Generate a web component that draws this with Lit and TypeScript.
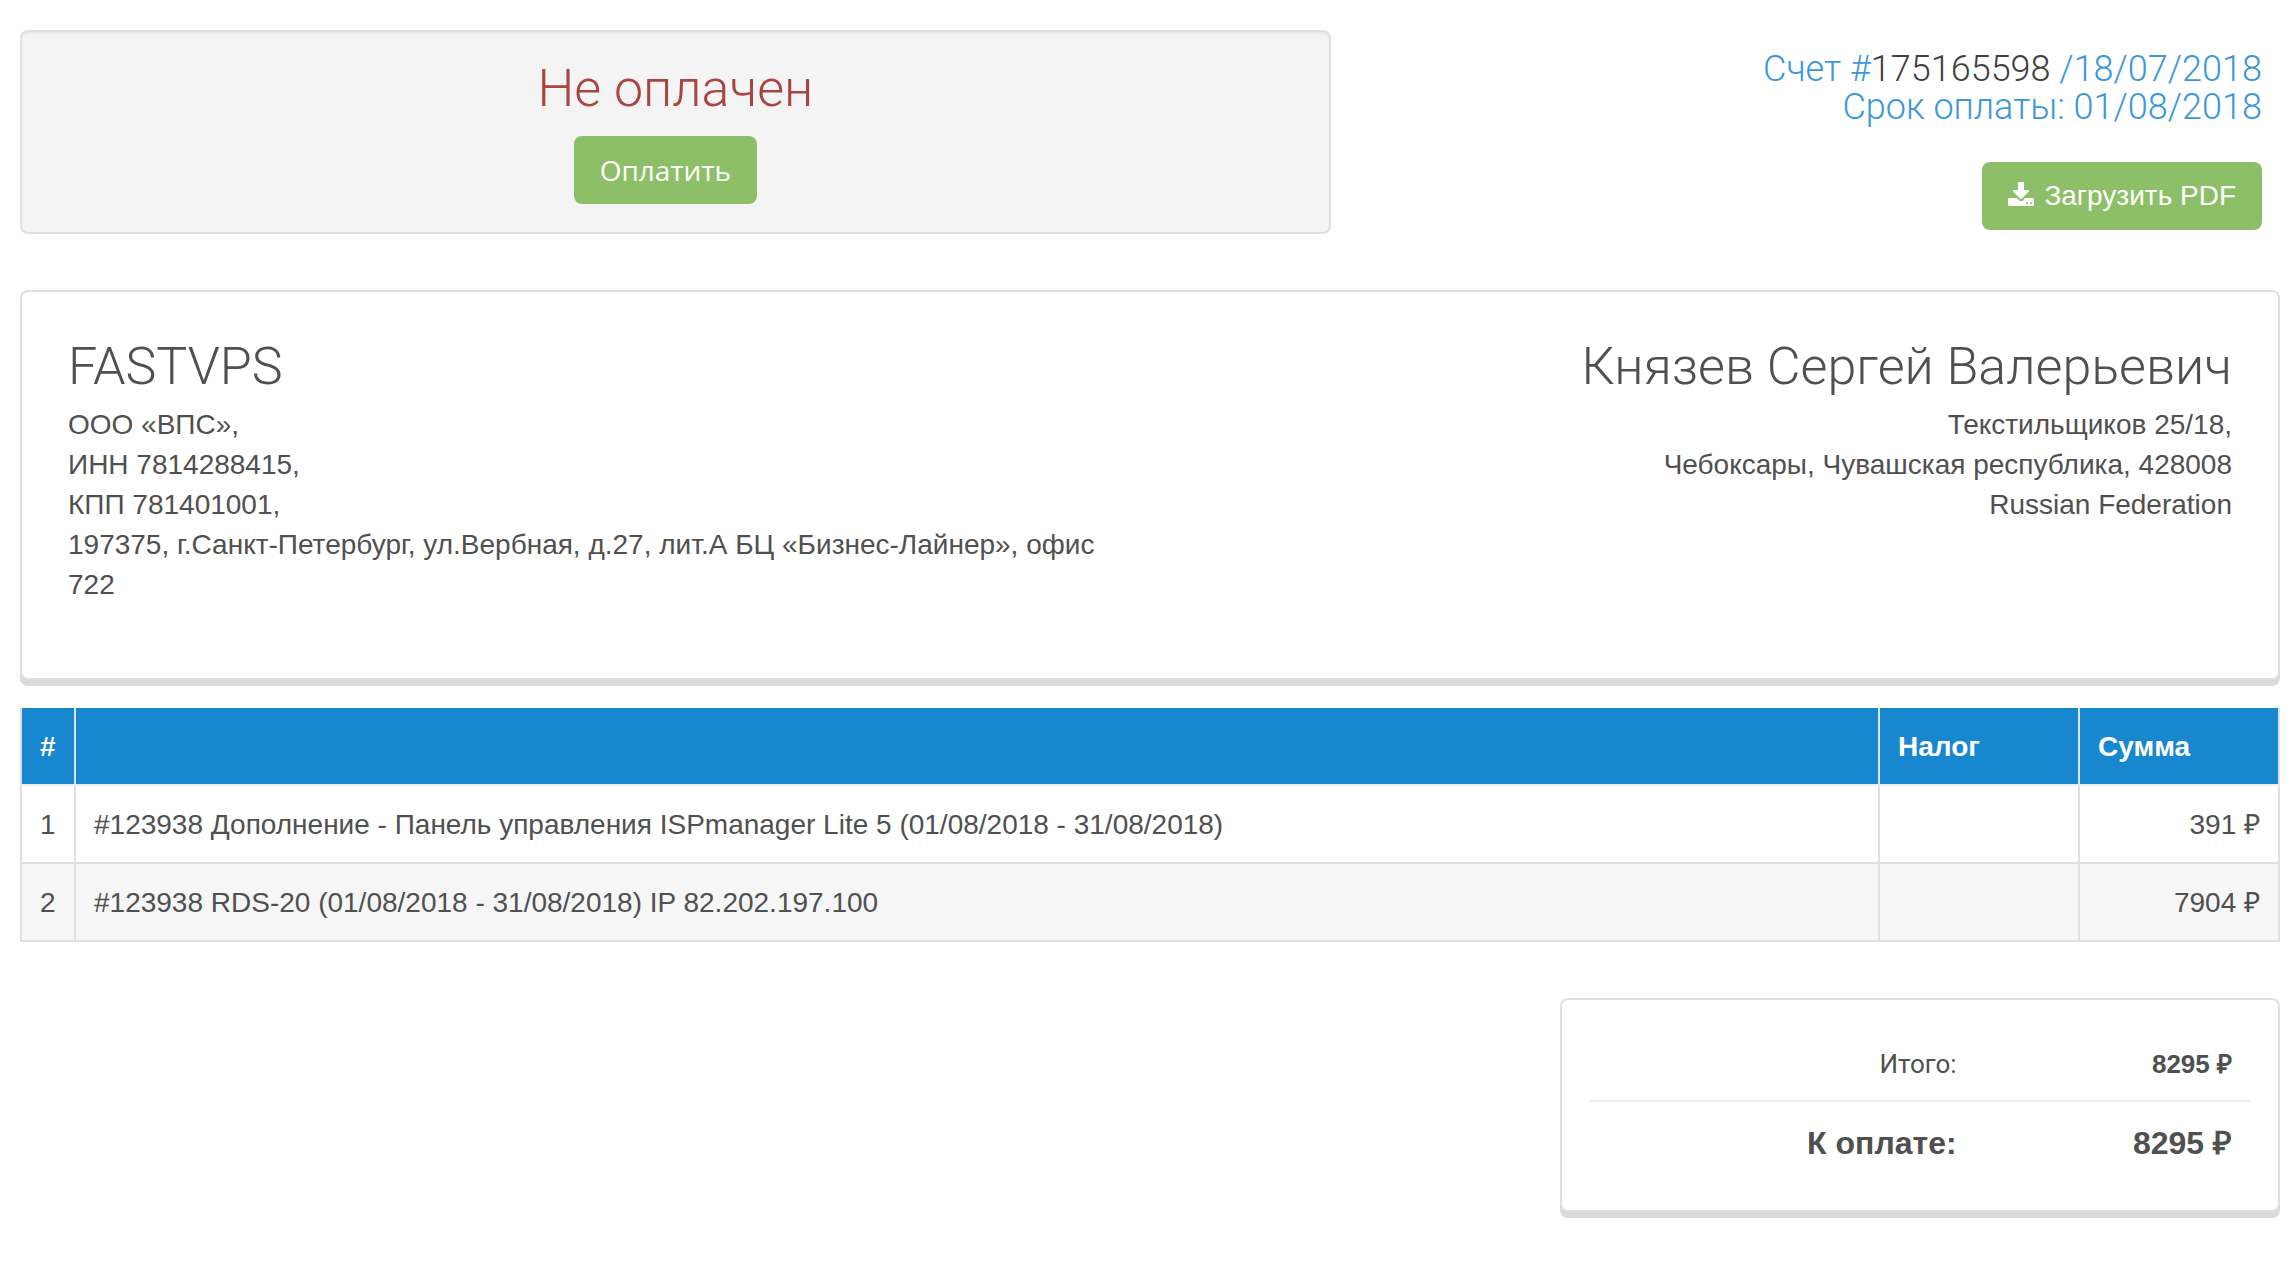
import { LitElement, html, css } from "lit";
import { customElement } from "lit/decorators.js";

interface InvoiceItem {
  id: number;
  description: string;
  tax: string;
  amount: string;
}

const ITEMS: InvoiceItem[] = [
  {
    id: 1,
    description:
      "#123938 Дополнение - Панель управления ISPmanager Lite 5 (01/08/2018 - 31/08/2018)",
    tax: "",
    amount: "391 ₽",
  },
  {
    id: 2,
    description: "#123938 RDS-20 (01/08/2018 - 31/08/2018) IP 82.202.197.100",
    tax: "",
    amount: "7904 ₽",
  },
];

const SELLER = [
  "ООО «ВПС»,",
  "ИНН 7814288415,",
  "КПП 781401001,",
  "197375, г.Санкт-Петербург, ул.Вербная, д.27, лит.А БЦ «Бизнес-Лайнер», офис 722",
];

const BUYER = [
  "Текстильщиков 25/18,",
  "Чебоксары, Чувашская республика, 428008",
  "Russian Federation",
];

@customElement("app-root")
export class AppRoot extends LitElement {
  static styles = css`
    :host {
      display: block;
      box-sizing: border-box;
      padding: 30px 16px 56px 20px;
      background: #fff;
      color: #505050;
      font: 28px/40px "Liberation Sans", Arial, sans-serif;
    }
    *,
    *::before {
      box-sizing: border-box;
    }
    h1,
    h2,
    p {
      margin: 0;
      font-weight: 300;
    }
    .top {
      display: flex;
      justify-content: space-between;
      align-items: flex-start;
      gap: 20px;
    }
    .status {
      flex: 0 0 58%;
      display: flex;
      flex-direction: column;
      align-items: center;
      gap: 19px;
      padding: 29px 28px 28px;
      border: 2px solid #e0e0e0;
      border-radius: 8px;
      background: #f4f4f4;
      box-shadow: inset 0 2px 2px rgba(0, 0, 0, 0.05);
    }
    .title {
      font-family: Roboto, sans-serif;
      font-size: 52px;
      line-height: 56px;
    }
    .unpaid {
      color: #a94442;
    }
    .button {
      display: inline-flex;
      align-items: center;
      gap: 10px;
      height: 68px;
      padding: 0 26px;
      border: 0;
      border-radius: 8px;
      background: #8cbf67;
      color: #fff;
      font: inherit;
      cursor: pointer;
    }
    .pay {
      margin-right: 20px;
      font-family: "Open Sans", sans-serif;
    }
    .icon {
      width: 26px;
      height: 24px;
      margin-bottom: 4px;
      fill: currentColor;
    }
    .info {
      display: flex;
      flex-direction: column;
      align-items: flex-end;
      gap: 36px;
      padding: 20px 18px 0 0;
      text-align: right;
    }
    .dates {
      color: #3b97d9;
      font-family: Roboto, sans-serif;
      font-size: 36px;
      line-height: 38px;
    }
    .number {
      color: #404040;
    }
    .card {
      border: 2px solid #e0e0e0;
      border-radius: 8px;
      background: #fff;
      box-shadow: 0 6px 0 #dadada;
    }
    .parties {
      display: grid;
      grid-template-columns: 1fr 1fr;
      gap: 60px;
      margin-top: 56px;
      padding: 47px 46px 73px;
    }
    .buyer {
      text-align: right;
    }
    .address {
      margin-top: 10px;
      font-style: normal;
    }
    .line {
      display: block;
    }
    .items {
      width: 100%;
      margin-top: 28px;
      border-spacing: 0;
      table-layout: fixed;
    }
    .col-id {
      width: 54px;
    }
    .col-tax {
      width: 200px;
    }
    .col-amount {
      width: 202px;
    }
    .cell {
      height: 78px;
      padding: 19px 0 17px 18px;
      border-left: 2px solid #e0e0e0;
      border-bottom: 2px solid #e0e0e0;
      text-align: left;
    }
    .cell:last-child {
      padding-right: 18px;
      border-right: 2px solid #e0e0e0;
    }
    .head {
      border-bottom-color: #eee;
      background: #1788cf;
      background-clip: padding-box;
      color: #fff;
      font-weight: 700;
    }
    .striped {
      background: #f6f6f6;
    }
    .amount {
      text-align: right;
    }
    .totals {
      width: calc((100% - 100px) / 3);
      margin: 56px 0 0 auto;
      padding: 28px 28px 26px;
    }
    .sums {
      margin: 0;
    }
    .row {
      display: grid;
      grid-template-columns: 5fr 4fr;
      padding: 16px 0;
      font-size: 26px;
      text-align: right;
    }
    .row + .row {
      border-top: 2px solid #eee;
      font-size: 32px;
      line-height: 50px;
      font-weight: 700;
    }
    .label {
      font-family: Roboto, sans-serif;
      font-weight: 400;
    }
    .due {
      font-weight: 700;
    }
    .value {
      margin: 0;
      padding-right: 18px;
      font-weight: 700;
    }
  `;

  private lines(items: string[]) {
    return html`<address class="address">
      ${items.map((line) => html`<span class="line">${line}</span>`)}
    </address>`;
  }

  render() {
    return html`
      <header class="top">
        <section class="status">
          <h1 class="title unpaid">Не оплачен</h1>
          <button class="button pay" type="button">Оплатить</button>
        </section>
        <div class="info">
          <p class="dates">
            Счет #<span class="number">175165598</span> /18/07/2018<br />
            Срок оплаты: 01/08/2018
          </p>
          <button class="button" type="button">
            <svg class="icon" viewBox="64 0 1664 1536" aria-hidden="true">
              <path
                d="M1344 1344q0-26-19-45t-45-19-45 19-19 45 19 45 45 19 45-19 19-45zm256 0q0-26-19-45t-45-19-45 19-19 45 19 45 45 19 45-19 19-45zm128-224v320q0 40-28 68t-68 28h-1472q-40 0-68-28t-28-68v-320q0-40 28-68t68-28h465l135 136q58 56 136 56t136-56l136-136h464q40 0 68 28t28 68zm-325-569q17 41-14 70l-448 448q-18 19-45 19t-45-19l-448-448q-31-29-14-70 17-39 59-39h256v-448q0-26 19-45t45-19h256q26 0 45 19t19 45v448h256q42 0 59 39z"
              />
            </svg>
            Загрузить PDF
          </button>
        </div>
      </header>

      <section class="card parties">
        <div>
          <h2 class="title">FASTVPS</h2>
          ${this.lines(SELLER)}
        </div>
        <div class="buyer">
          <h2 class="title">Князев Сергей Валерьевич</h2>
          ${this.lines(BUYER)}
        </div>
      </section>

      <table class="items">
        <colgroup>
          <col class="col-id" />
          <col />
          <col class="col-tax" />
          <col class="col-amount" />
        </colgroup>
        <thead>
          <tr>
            <th class="cell head" scope="col">#</th>
            <th class="cell head" scope="col"></th>
            <th class="cell head" scope="col">Налог</th>
            <th class="cell head" scope="col">Сумма</th>
          </tr>
        </thead>
        <tbody>
          ${ITEMS.map(
            (item, i) => html`<tr class=${i % 2 ? "striped" : ""}>
              <td class="cell">${item.id}</td>
              <td class="cell">${item.description}</td>
              <td class="cell">${item.tax}</td>
              <td class="cell amount">${item.amount}</td>
            </tr>`
          )}
        </tbody>
      </table>

      <section class="card totals">
        <dl class="sums">
          <div class="row">
            <dt class="label">Итого:</dt>
            <dd class="value">8295 ₽</dd>
          </div>
          <div class="row">
            <dt class="due">К оплате:</dt>
            <dd class="value">8295 ₽</dd>
          </div>
        </dl>
      </section>
    `;
  }
}
